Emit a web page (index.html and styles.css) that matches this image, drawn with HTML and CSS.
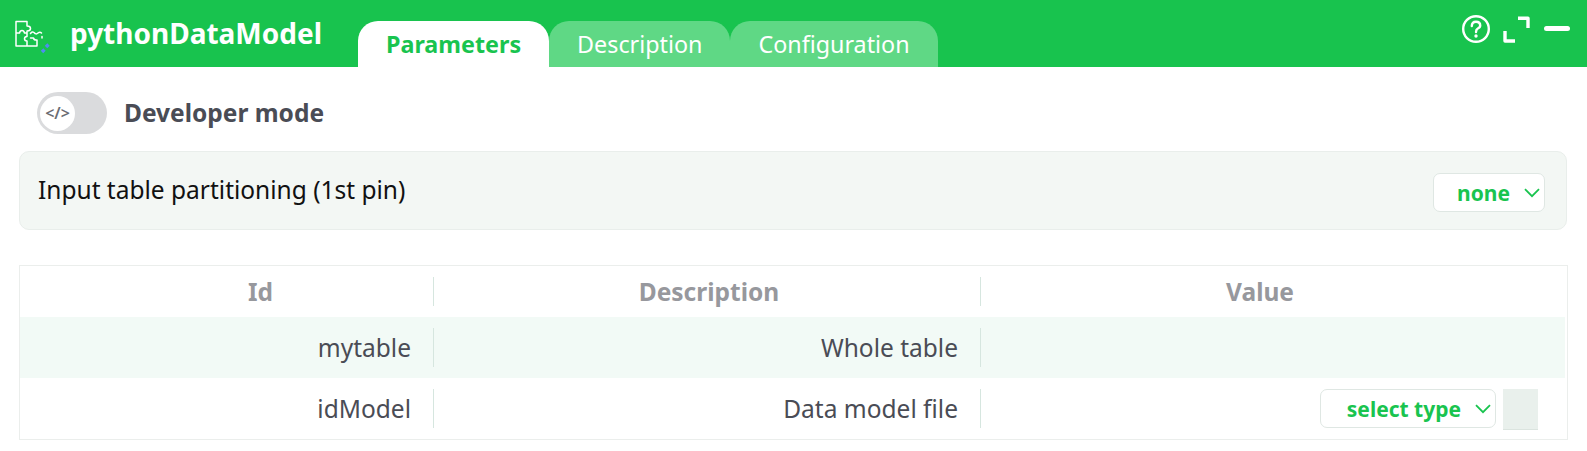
FILE: index.html
```html
<!DOCTYPE html>
<html lang="en">
<head>
<meta charset="utf-8">
<title>pythonDataModel</title>
<link rel="stylesheet" href="styles.css">
</head>
<body>
<header class="topbar">
  <div class="brand">
    <svg class="logo" width="38" height="36" viewBox="0 0 38 36" fill="none">
      <path d="M2 1.500H13V6Q16.500 6 16.500 8.500Q16.500 11 13 11V13M2 1.500V26H23V20M2 13H5.500Q6 10.500 8 10.500Q10 10.500 10.500 13H13V16.500Q10.500 16.500 10.500 18.800Q10.500 21 13 21V26M16.500 13.500Q18 11 20 12.500Q22 15 24 13Q26 11.500 27.500 13M23 20Q20 20.500 19.500 18H16.500M28 16.500V18" stroke="#fff" stroke-width="1.500" stroke-linecap="round" stroke-linejoin="round"/>
      <path d="M32 27l2.500-2.500M28 32l2.500-2.500" stroke="#4f8cf0" stroke-width="3.400"/>
    </svg>
    <span class="app-title">pythonDataModel</span>
  </div>
  <nav class="tabs">
    <span class="tab tab-active">Parameters</span>
    <span class="tab">Description</span>
    <span class="tab">Configuration</span>
  </nav>
  <div class="win-actions">
    <svg width="30" height="30" viewBox="0 0 30 30" fill="none">
      <circle cx="15" cy="15" r="12.800" stroke="#fff" stroke-width="2.400"/>
      <path d="M10.800 12Q10.800 7.800 15 7.800Q19.200 7.800 19.200 11.500Q19.200 13.500 16.800 14.500Q15 15.500 15 18" stroke="#fff" stroke-width="2.400" stroke-linecap="round"/>
      <circle cx="15" cy="22" r="1.700" fill="#fff"/>
    </svg>
    <svg class="expand" width="27" height="27" viewBox="0 0 27 27" fill="none">
      <path d="M15 2.200H25V12M2 15V25H12" stroke="#fff" stroke-width="3.400" stroke-linejoin="round"/>
    </svg>
    <span class="minimize"></span>
  </div>
</header>
<main class="content">
  <div class="dev-row">
    <span class="toggle"><span class="knob">&lt;/&gt;</span></span>
    <span class="dev-label">Developer mode</span>
  </div>
  <section class="panel">
    <span class="panel-label">Input table partitioning (1st pin)</span>
    <span class="select select-none">none<svg class="chev" width="16" height="10" viewBox="0 0 16 10" fill="none"><path d="M1 1.200L8 8.200L15 1.200" stroke="#19c44f" stroke-width="1.800"/></svg></span>
  </section>
  <section class="table">
    <div class="row head">
      <div class="cell c-id"><span>Id</span></div>
      <div class="cell c-desc"><span>Description</span></div>
      <div class="cell c-val"><span>Value</span></div>
    </div>
    <div class="row tint">
      <div class="cell c-id"><span>mytable</span></div>
      <div class="cell c-desc"><span>Whole table</span></div>
      <div class="cell c-val"></div>
    </div>
    <div class="row">
      <div class="cell c-id"><span>idModel</span></div>
      <div class="cell c-desc"><span>Data model file</span></div>
      <div class="cell c-val">
        <span class="select select-type">select type<svg class="chev" width="16" height="10" viewBox="0 0 16 10" fill="none"><path d="M1 1.200L8 8.200L15 1.200" stroke="#19c44f" stroke-width="1.800"/></svg></span>
        <span class="swatch"></span>
      </div>
    </div>
  </section>
</main>
</body>
</html>
```
FILE: styles.css
```css
* { box-sizing: border-box; }
html, body { margin: 0; padding: 0; }
body {
  background: #fff;
  font-family: "Noto Sans", sans-serif;
  color: #4a4c55;
  width: 1587px;
  height: 451px;
  overflow: hidden;
}
.topbar {
  height: 67px;
  background: #18c34e;
  display: flex;
  align-items: flex-start;
  position: relative;
}
.brand {
  width: 358px;
  height: 67px;
  padding: 15px 0 0 14px;
  display: flex;
  align-items: flex-start;
}
.logo { flex: none; margin-top: 5px; margin-right: -2px; }
.app-title {
  margin-left: 20px;
  font-size: 28px;
  line-height: 36px;
  font-weight: 700;
  color: #fff;
}
.tabs { display: flex; padding-top: 21px; }
.tab {
  height: 46px;
  padding: 0 28px;
  display: flex;
  align-items: center;
  font-size: 23.300px;
  color: #fff;
  background: #5fd885;
  border-radius: 20px 20px 0 0;
}
.tab-active {
  background: #fff;
  color: #19c44f;
  font-weight: 700;
}
.win-actions {
  margin-left: auto;
  padding: 14px 17px 0 0;
  display: flex;
  align-items: flex-start;
}
.expand { margin: 2px 0 0 12px; }
.minimize {
  width: 26px;
  height: 5px;
  border-radius: 3px;
  background: #fff;
  margin: 12px 0 0 14px;
}
.content { padding: 25px 19px 0; }
.dev-row {
  display: flex;
  align-items: center;
  height: 42px;
  padding-left: 18px;
}
.toggle {
  width: 70px;
  height: 42px;
  border-radius: 21px;
  background: #dadbdd;
  padding: 3px;
  display: flex;
  align-items: center;
}
.knob {
  width: 35px;
  height: 35px;
  border-radius: 50%;
  background: #fff;
  display: flex;
  align-items: center;
  justify-content: center;
  font-size: 16px;
  font-weight: 600;
  color: #6a6c72;
}
.dev-label {
  margin: 0 0 2px 17px;
  font-size: 24.500px;
  font-weight: 700;
}
.panel {
  margin: 17px 1px 0 0;
  height: 79px;
  background: #f3f7f4;
  border: 1px solid #e9eeeb;
  border-radius: 10px;
  display: flex;
  align-items: center;
  justify-content: space-between;
  padding: 0 21px 0 18px;
}
.panel-label { font-size: 24.500px; color: #111; margin-bottom: 2px; }
.select {
  height: 39px;
  background: #fff;
  border: 1px solid #dfe7e3;
  border-radius: 7px;
  display: flex;
  align-items: center;
  justify-content: flex-end;
  font-size: 21px;
  font-weight: 700;
  color: #19c44f;
  padding-right: 4px;
}
.panel .select { margin-top: 4px; }
.select-none { width: 112px; }
.select-type { width: 176px; }
.chev { margin-left: 14px; }
.table {
  margin-top: 35px;
  height: 175px;
  border: 1px solid #ebeeec;
  padding-right: 2px;
}
.row { display: flex; height: 61px; align-items: center; font-size: 24.500px; }
.head { height: 51px; font-weight: 700; color: #97989d; }
.cell { height: 100%; display: flex; align-items: center; }
.tint { background: #f2faf6; }
.c-id, .c-desc { position: relative; }
.c-id::after, .c-desc::after {
  content: "";
  position: absolute;
  right: 0;
  top: 11px;
  bottom: 11px;
  width: 1px;
  background: #d6e6df;
}
.c-id { width: 414px; justify-content: flex-end; padding-right: 23px; }
.c-desc { width: 547px; justify-content: flex-end; padding-right: 23px; }
.c-val { flex: 1; justify-content: flex-end; padding-right: 27px; }
.head .c-id { justify-content: center; padding: 0 0 0 67px; }
.head .c-desc { justify-content: center; padding: 0 0 0 3px; }
.head .c-val { justify-content: center; padding: 0 26px 0 0; }
.swatch {
  width: 35px;
  height: 41px;
  margin: 2px 0 0 7px;
  background: #e9f0ec;
  border-bottom: 1px solid #dbe4df;
}
```
